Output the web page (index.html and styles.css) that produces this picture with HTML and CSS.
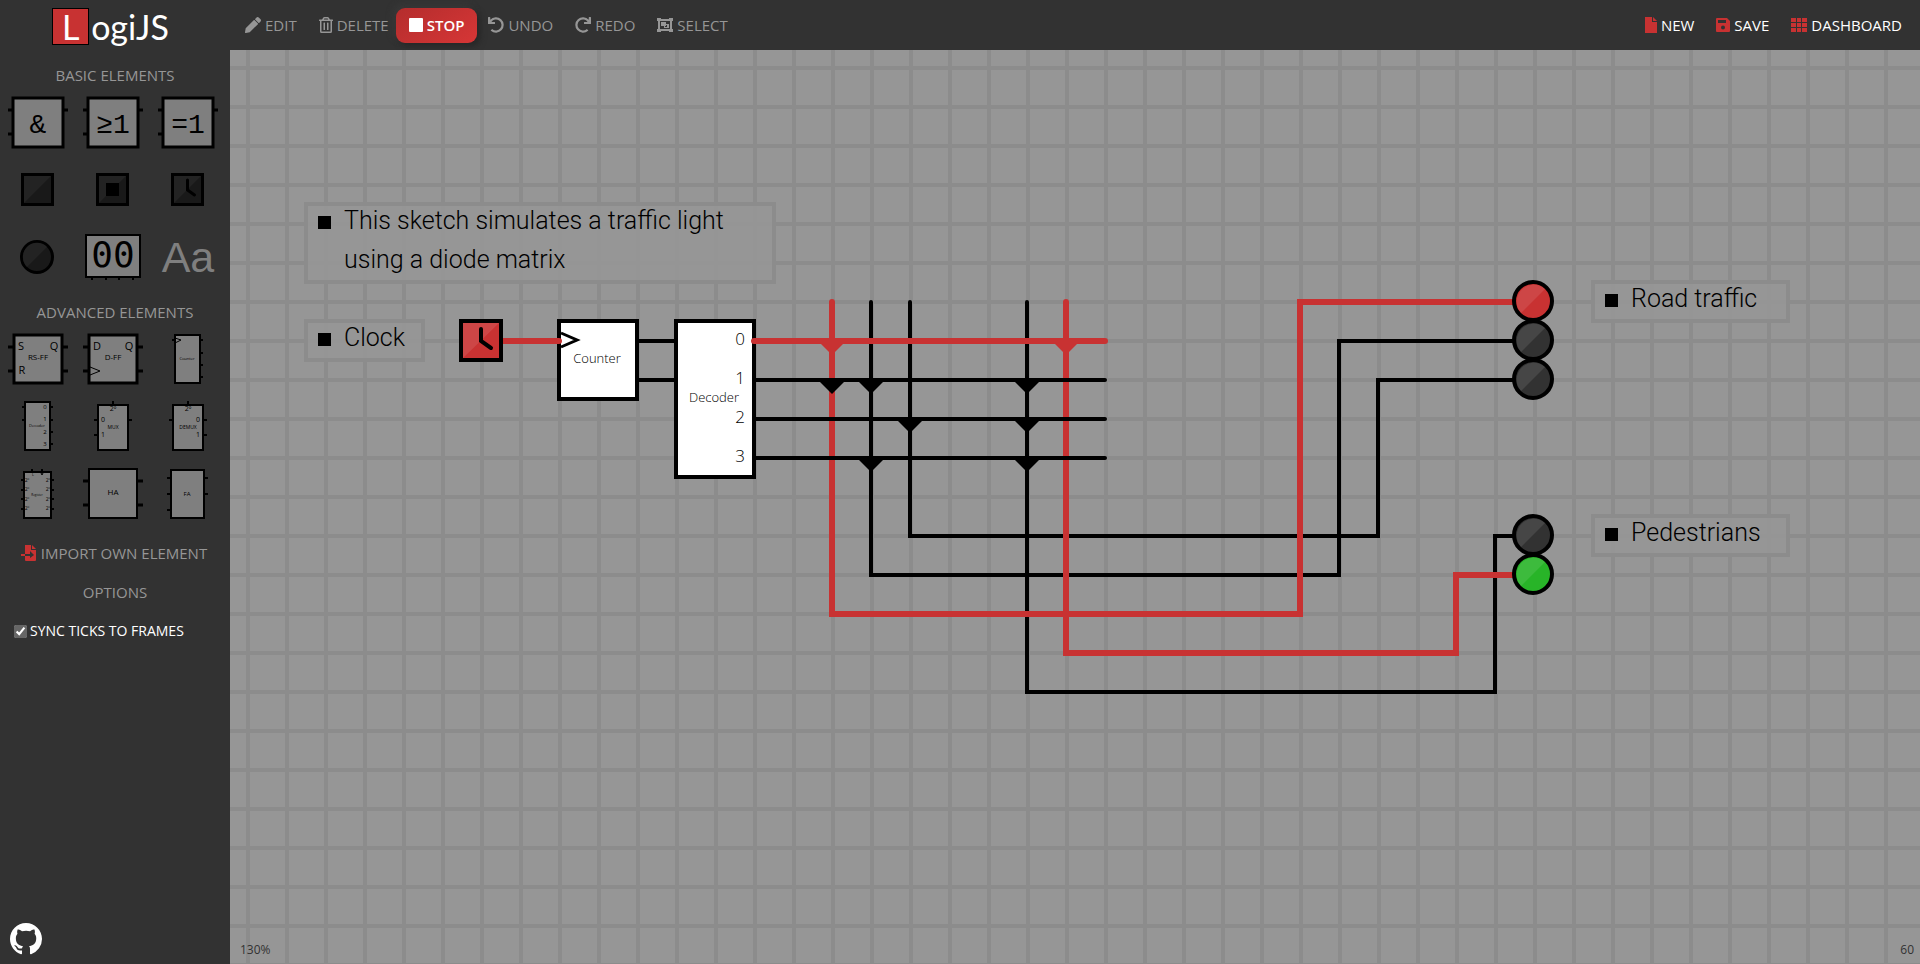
FILE: index.html
```html
<!DOCTYPE html>
<html lang="en">
<head>
<meta charset="utf-8">
<title>LogiJS</title>
<link rel="stylesheet" href="styles.css">
</head>
<body>
<div class="app">
  <aside class="sidebar">
    <a class="logo" href="#" aria-label="LogiJS"><span class="logo-mark">L</span><span class="logo-rest">ogiJS</span></a>

    <h2 class="heading">BASIC ELEMENTS</h2>
    <div class="palette">
      <button class="element" aria-label="AND gate"><svg viewBox="0 0 75 67"><path class="pin" d="M8 21h5M8 45h5M63 21h5"/><rect class="body thick" x="13" y="9" width="50" height="49"/><text class="mono" x="38" y="44">&amp;</text></svg></button>
      <button class="element" aria-label="OR gate"><svg viewBox="0 0 75 67"><path class="pin" d="M8 21h5M8 45h5M63 21h5"/><rect class="body thick" x="13" y="9" width="50" height="49"/><text class="mono" x="38" y="44">≥1</text></svg></button>
      <button class="element" aria-label="XOR gate"><svg viewBox="0 0 75 67"><path class="pin" d="M8 21h5M8 45h5M63 21h5"/><rect class="body thick" x="13" y="9" width="50" height="49"/><text class="mono" x="38" y="44">=1</text></svg></button>
      <button class="element" aria-label="Switch"><svg viewBox="0 0 75 67"><rect class="dark" x="22.500" y="18.500" width="30" height="30"/><path class="gloss" d="M24 20h27L24 47z"/></svg></button>
      <button class="element" aria-label="Button"><svg viewBox="0 0 75 67"><rect class="dark" x="22.500" y="18.500" width="30" height="30"/><path class="gloss" d="M24 20h27L24 47z"/><path d="M31 27h13v13H31z"/></svg></button>
      <button class="element" aria-label="Clock"><svg viewBox="0 0 75 67"><rect class="dark" x="22.500" y="18.500" width="30" height="30"/><path class="gloss" d="M24 20h27L24 47z"/><path class="hands" d="M37.500 24v10l7 5"/></svg></button>
      <button class="element" aria-label="Lamp"><svg viewBox="0 0 75 67"><circle class="dark" cx="37" cy="34" r="15.500"/><path class="gloss" d="M47 24A14 14 0 0 0 27 44z"/></svg></button>
      <button class="element" aria-label="Segment display"><svg viewBox="0 0 75 67"><path class="pin slim" d="M17 54v3M31 54v3M44 54v3M58 54v3"/><rect class="body medium" x="11" y="12" width="54" height="42"/><text class="digits" x="38" y="44">00</text></svg></button>
      <button class="element" aria-label="Label"><svg viewBox="0 0 75 67"><text class="letters" x="38" y="49">Aa</text></svg></button>
    </div>

    <h2 class="heading">ADVANCED ELEMENTS</h2>
    <div class="palette">
      <button class="element" aria-label="RS flip-flop"><svg viewBox="0 0 75 67"><path class="pin" d="M8 21h5M8 45h5M63 21h5M63 45h5"/><rect class="body" x="14" y="9" width="48" height="48"/><text class="t11" x="21" y="24">S</text><text class="t11" x="22" y="48">R</text><text class="t11" x="54" y="24">Q</text><text class="t8" x="38" y="34">RS-FF</text></svg></button>
      <button class="element" aria-label="D flip-flop"><svg viewBox="0 0 75 67"><path class="pin" d="M8 21h5M8 45h5M63 21h5M63 45h5"/><rect class="body" x="14" y="9" width="48" height="48"/><path class="line" d="M15 41l10 4-10 4"/><text class="t11" x="22" y="24">D</text><text class="t11" x="54" y="24">Q</text><text class="t8" x="38" y="34">D-FF</text></svg></button>
      <button class="element" aria-label="Counter"><svg viewBox="0 0 75 67"><path class="pin slim" d="M22 14h3M50 14h3M50 27h3M50 39h3M50 51h3"/><rect class="body thin" x="25" y="9" width="25" height="48"/><path class="line" d="M25 12l6 2-6 3"/><text class="t4" x="37" y="34">Counter</text></svg></button>
      <button class="element" aria-label="Decoder"><svg viewBox="0 0 75 67"><path class="pin slim" d="M22 14h3M22 27h3M50 14h3M50 27h3M50 39h3M50 51h3"/><rect class="body thin" x="25" y="9" width="25" height="48"/><text class="t6" x="45" y="16">0</text><text class="t6" x="45" y="28">1</text><text class="t6" x="45" y="41">2</text><text class="t6" x="45" y="53">3</text><text class="t4" x="37" y="34">Decoder</text></svg></button>
      <button class="element" aria-label="Multiplexer"><svg viewBox="0 0 75 67"><path class="pin slim" d="M38 8v3M19 27h3M19 42h3M53 27h4"/><rect class="body thin" x="23" y="12" width="30" height="45"/><text class="t7" x="38" y="18">2º</text><text class="t7" x="28" y="29">0</text><text class="t7" x="28" y="44">1</text><text class="t5" x="38" y="36">MUX</text></svg></button>
      <button class="element" aria-label="Demultiplexer"><svg viewBox="0 0 75 67"><path class="pin slim" d="M38 8v3M19 27h3M53 42h4M53 27h4"/><rect class="body thin" x="23" y="12" width="30" height="45"/><text class="t7" x="38" y="18">2º</text><text class="t7" x="48" y="29">0</text><text class="t7" x="48" y="44">1</text><text class="t5" x="38" y="36">DEMUX</text></svg></button>
      <button class="element" aria-label="Register"><svg viewBox="0 0 75 67"><path class="pin slim" d="M32 9v3M42 9v3M21 20h3M21 30h3M21 39h3M21 49h3M51 20h3M51 30h3M51 39h3M51 49h3"/><rect class="body thin" x="24" y="12" width="27" height="46"/><path class="line" d="M40 11l2 4 2-4"/><text class="t4" x="33" y="16">L</text><text class="t5" x="27" y="22">2º</text><text class="t5" x="27" y="31">2º</text><text class="t5" x="27" y="41">2º</text><text class="t5" x="27" y="50">2º</text><text class="t5" x="48" y="22">2º</text><text class="t5" x="48" y="31">2º</text><text class="t5" x="48" y="41">2º</text><text class="t5" x="48" y="50">2º</text><text class="t3" x="37" y="36">Register</text></svg></button>
      <button class="element" aria-label="Half adder"><svg viewBox="0 0 75 67"><path class="pin" d="M8 21h5M8 45h5M63 21h5M63 45h5"/><rect class="body medium" x="14" y="9" width="48" height="49"/><text class="t8" x="38" y="35">HA</text></svg></button>
      <button class="element" aria-label="Full adder"><svg viewBox="0 0 75 67"><path class="pin slim" d="M17 18h4M17 34h4M17 50h4M54 18h4M54 34h4"/><rect class="body thin" x="21" y="10" width="33" height="48"/><text class="t6" x="37" y="36">FA</text></svg></button>
    </div>

    <button class="import"><svg class="icon" viewBox="0 0 16 16"><path fill="#c83232" d="M4 0h6v5h5v10a1 1 0 0 1-1 1H5a1 1 0 0 1-1-1v-4h5v2l4-3-4-4v3H4zM11 0l4 4h-4z"/><path fill="#c83232" d="M0 9h4v2H0z"/></svg>IMPORT OWN ELEMENT</button>
    <h2 class="heading">OPTIONS</h2>
    <label class="option"><input type="checkbox" checked>SYNC TICKS TO FRAMES</label>

    <a class="github" href="#" aria-label="GitHub"><svg viewBox="0 0 16 16"><path fill="#fff" d="M8 0C3.580 0 0 3.580 0 8c0 3.540 2.290 6.530 5.470 7.590.4.070.55-.17.55-.38 0-.19-.01-.82-.01-1.490-2.010.37-2.530-.49-2.690-.94-.09-.23-.48-.94-.82-1.130-.28-.15-.68-.52-.01-.53.63-.01 1.080.58 1.230.82.72 1.210 1.870.87 2.330.66.07-.52.28-.87.51-1.070-1.780-.2-3.640-.89-3.640-3.950 0-.87.31-1.590.82-2.150-.08-.2-.36-1.020.08-2.120 0 0 .67-.21 2.200.82.64-.18 1.320-.27 2-.27s1.360.09 2 .27c1.530-1.040 2.200-.82 2.200-.82.44 1.100.16 1.920.08 2.120.51.56.82 1.270.82 2.150 0 3.070-1.870 3.750-3.650 3.950.29.25.54.73.54 1.480 0 1.070-.01 1.930-.01 2.200 0 .21.15.46.55.38A8.010 8.010 0 0 0 16 8c0-4.420-3.580-8-8-8z"/></svg></a>
  </aside>

  <main class="main">
    <nav class="toolbar">
      <button class="tool"><svg class="icon" viewBox="0 0 512 512"><path d="M498 142l-46 46c-5 5-12 5-17 0L324 77c-5-5-5-12 0-17l46-46c19-19 49-19 68 0l60 60c19 19 19 49 0 68zM285 98L22 361 0 484c-3 16 12 31 28 28l123-22 263-262c5-5 5-12 0-17L302 98c-5-5-12-5-17 0z"/></svg>EDIT</button>
      <button class="tool"><svg class="icon narrow" viewBox="0 0 448 512"><path d="M268 416h24a12 12 0 0 0 12-12V188a12 12 0 0 0-12-12h-24a12 12 0 0 0-12 12v216a12 12 0 0 0 12 12zM432 80h-82l-34-57A48 48 0 0 0 275 0H173a48 48 0 0 0-41 23L98 80H16A16 16 0 0 0 0 96v16a16 16 0 0 0 16 16h16v336a48 48 0 0 0 48 48h288a48 48 0 0 0 48-48V128h16a16 16 0 0 0 16-16V96a16 16 0 0 0-16-16zM172 51a6 6 0 0 1 5-3h94a6 6 0 0 1 5 3l18 29H154zM368 464H80V128h288zM156 416h24a12 12 0 0 0 12-12V188a12 12 0 0 0-12-12h-24a12 12 0 0 0-12 12v216a12 12 0 0 0 12 12z"/></svg>DELETE</button>
      <button class="tool stop"><svg class="icon narrow" viewBox="0 0 14 14"><rect width="14" height="14" rx="1"/></svg>STOP</button>
      <button class="tool"><svg class="icon" viewBox="0 0 512 512"><path d="M212 224H12a12 12 0 0 1-12-12V12A12 12 0 0 1 12 0h48a12 12 0 0 1 12 12v78A247 247 0 1 1 92 441a12 12 0 0 1 0-17l34-34a12 12 0 0 1 16 0A176 176 0 1 0 108 156h104a12 12 0 0 1 12 12v44a12 12 0 0 1-12 12z"/></svg>UNDO</button>
      <button class="tool"><svg class="icon" viewBox="0 0 512 512"><path transform="matrix(-1 0 0 1 512 0)" d="M212 224H12a12 12 0 0 1-12-12V12A12 12 0 0 1 12 0h48a12 12 0 0 1 12 12v78A247 247 0 1 1 92 441a12 12 0 0 1 0-17l34-34a12 12 0 0 1 16 0A176 176 0 1 0 108 156h104a12 12 0 0 1 12 12v44a12 12 0 0 1-12 12z"/></svg>REDO</button>
      <button class="tool"><svg class="icon" viewBox="0 0 16 16"><path fill-rule="evenodd" d="M0 1h4v1h8V1h4v3h-1v8h1v3h-4v-1H4v1H0v-3h1V4H0zM3 4v8h10V4zM4 5h5v2h3v4H7V9H4zm6 3v2h-2V9H9V8z"/></svg>SELECT</button>
      <div class="spacer"></div>
      <button class="tool file"><svg class="icon page" viewBox="0 0 12 16"><path d="M0 0h7v5h5v11H0zM8 0l4 4H8z"/></svg>NEW</button>
      <button class="tool file"><svg class="icon narrow" viewBox="0 0 14 14"><path fill-rule="evenodd" d="M1 0h10l3 3v10a1 1 0 0 1-1 1H1a1 1 0 0 1-1-1V1a1 1 0 0 1 1-1zM2 2v3h8V2zM7 7.500a2 2 0 1 0 0 4 2 2 0 0 0 0-4z"/></svg>SAVE</button>
      <a class="tool file" href="#"><svg class="icon" viewBox="0 0 16 14"><path d="M0 0h5v4H0zM6 0h4v4H6zM11 0h5v4h-5zM0 5h5v4H0zM6 5h4v4H6zM11 5h5v4h-5zM0 10h5v4H0zM6 10h4v4H6zM11 10h5v4h-5z"/></svg>DASHBOARD</a>
    </nav>

    <div class="workspace">
      <svg class="sketch" role="img" aria-label="Traffic light circuit">
        <defs>
          <pattern id="grid" x="16" y="16" width="39" height="39" patternUnits="userSpaceOnUse"><path class="grid-line" d="M0 0h39v4H4v35H0z"/></pattern>
          <g id="gloss"><path class="shine" d="M12-12A17 17 0 0 0-12 12z"/></g>
          <path id="diode" d="M-12 2h24L0 14z"/>
        </defs>
        <rect width="100%" height="100%" fill="url(#grid)"/>
        <g transform="translate(-230 -50)">
          <g class="wire">
            <path d="M871 302V575H1339V341H1520"/>
            <path d="M910 302V536H1378V380H1520"/>
            <path d="M1027 302V692H1495V536H1520"/>
          </g>
          <g class="wire on">
            <path d="M832 302V614H1300V302H1520"/>
            <path d="M1066 302V653H1456V575H1520"/>
          </g>
          <path class="wire" d="M637 341H676M637 380H676M754 380H1105M754 419H1105M754 458H1105"/>
          <g>
            <use href="#diode" x="832" y="380"/><use href="#diode" x="871" y="380"/><use href="#diode" x="1027" y="380"/>
            <use href="#diode" x="910" y="419"/><use href="#diode" x="1027" y="419"/>
            <use href="#diode" x="871" y="458"/><use href="#diode" x="1027" y="458"/>
          </g>
          <g class="diode-on"><use href="#diode" x="832" y="341"/><use href="#diode" x="1066" y="341"/></g>

          <rect class="chip" x="559" y="321" width="78" height="78"/>
          <path class="edge" d="M561 333l16 7-16 7"/>
          <text class="name" x="597" y="363">Counter</text>
          <rect class="chip" x="676" y="321" width="78" height="156"/>
          <text class="port" x="740" y="345">0</text>
          <text class="port" x="740" y="384">1</text>
          <text class="port" x="740" y="423">2</text>
          <text class="port" x="740" y="462">3</text>
          <text class="name" x="714" y="402">Decoder</text>
          <path class="wire on" d="M500 341H559M754 341H1105"/>

          <rect class="clock" x="461" y="321" width="40" height="39"/>
          <path class="shine" d="M463 323h36l-36 35z"/>
          <path class="clock-hands" d="M481 329v12l10 7"/>

          <g class="lamp lit-red" transform="translate(1533 301)"><circle r="19"/><use href="#gloss"/></g>
          <g class="lamp" transform="translate(1533 340)"><circle r="19"/><use href="#gloss"/></g>
          <g class="lamp" transform="translate(1533 379)"><circle r="19"/><use href="#gloss"/></g>
          <g class="lamp" transform="translate(1533 535)"><circle r="19"/><use href="#gloss"/></g>
          <g class="lamp lit-green" transform="translate(1533 574)"><circle r="19"/><use href="#gloss"/></g>

          <g class="note"><rect x="306" y="204" width="468" height="78"/><path d="M318 216h13v13h-13z"/><text x="344" y="229">This sketch simulates a traffic light</text><text x="344" y="268">using a diode matrix</text></g>
          <g class="note"><rect x="306" y="321" width="117" height="39"/><path d="M318 333h13v13h-13z"/><text x="344" y="346">Clock</text></g>
          <g class="note"><rect x="1593" y="282" width="195" height="39"/><path d="M1605 294h13v13h-13z"/><text x="1631" y="307">Road traffic</text></g>
          <g class="note"><rect x="1593" y="516" width="195" height="39"/><path d="M1605 528h13v13h-13z"/><text x="1631" y="541">Pedestrians</text></g>
        </g>
      </svg>
      <span class="status zoom-level">130%</span>
      <span class="status frame-rate">60</span>
    </div>
  </main>
</div>
</body>
</html>
```
FILE: styles.css
```css
* { box-sizing: border-box; }
body {
  margin: 0;
  font-family: "Open Sans", "Noto Sans", sans-serif;
  font-size: 15px;
  color: #969696;
  background: #323232;
}
button { font: inherit; color: inherit; background: none; border: 0; padding: 0; cursor: pointer; }
a { color: inherit; text-decoration: none; }
svg { display: block; }

.app { display: flex; min-height: 100vh; }

/* Sidebar */
.sidebar {
  flex: 0 0 230px;
  display: flex;
  flex-direction: column;
  align-items: stretch;
  background: #323232;
}
.logo {
  display: flex;
  justify-content: center;
  gap: 2px;
  margin: 8px 9px 15px 0;
  height: 38px;
  font-family: Lato, sans-serif;
  font-size: 34px;
  line-height: 38px;
  color: #fff;
}
.logo-mark {
  width: 37px;
  height: 37px;
  line-height: 36px;
  text-align: center;
  background: #c83232;
  border: 1px solid #000;
}
.heading {
  margin: 0;
  font-size: 15px;
  font-weight: 400;
  line-height: 28px;
  text-align: center;
}
.palette {
  display: grid;
  grid-template-columns: repeat(3, 75px);
  grid-auto-rows: 67px;
  margin-bottom: 8px;
}
.element svg { width: 75px; height: 67px; }
.pin { stroke: #000; stroke-width: 3; }
.pin.slim { stroke-width: 2; }
.body { fill: #7f7f7f; stroke: #000; stroke-width: 3; }
.body.thin { stroke-width: 2; }
.body.medium { stroke-width: 2; }
.dark { fill: #191919; stroke: #000; stroke-width: 3; }
.gloss { fill: #232323; }
.hands { fill: none; stroke: #000; stroke-width: 3; stroke-linecap: round; }
.line { fill: none; stroke: #000; stroke-width: 1; }
.element text { text-anchor: middle; fill: #000; }
.element .mono { font-family: "Liberation Mono", monospace; font-size: 28px; }
.element .digits { font-family: "DejaVu Sans Mono", monospace; font-size: 36px; }
.element .letters { font-family: "Liberation Sans", Arial, sans-serif; font-size: 43px; fill: #7f7f7f; }
.t11 { font-size: 11px; }
.t8 { font-size: 8px; }
.t7 { font-size: 7px; }
.t6 { font-size: 6px; }
.t5 { font-size: 5px; }
.t4 { font-size: 4px; }
.t3 { font-size: 3px; }

.import {
  display: flex;
  justify-content: center;
  align-items: center;
  gap: 4px;
  height: 36px;
  margin: 0 2px 7px 0;
}
.option {
  display: flex;
  align-items: center;
  gap: 3px;
  margin: 15px 0 0 14px;
  font-size: 14px;
  line-height: 20px;
  color: #fff;
}
.option input { width: 13px; height: 13px; margin: 0; accent-color: #666; }
.github { margin: auto 0 9px 10px; width: 32px; }

/* Toolbar */
.main { flex: 1; display: flex; flex-direction: column; min-width: 0; }
.toolbar {
  display: flex;
  align-items: center;
  height: 50px;
  padding: 0 7px 0 4px;
  background: #323232;
}
.tool {
  display: flex;
  align-items: center;
  gap: 4px;
  height: 35px;
  padding: 0 11px;
}
.icon { width: 16px; height: 16px; fill: currentColor; }
.icon.narrow { width: 14px; }
.icon.page { width: 12px; }
.stop {
  margin-left: -4px;
  padding: 0 13px;
  color: #fff;
  font-weight: 600;
  border-radius: 9px;
  background: linear-gradient(145deg, #b42d2d, #d63636);
  box-shadow: 3px 3px 6px #262626, -3px -3px 6px #3a3a3a;
}
.file { color: #fff; }
.file .icon { fill: #c83232; }
.spacer { flex: 1; }

/* Sketch canvas */
.workspace { position: relative; flex: 1; background: #969696; display: flex; overflow: hidden; }
.sketch { flex: 1; width: 100%; }
.grid-line { fill: #8c8c8c; }
.wire { fill: none; stroke: #000; stroke-width: 4; stroke-linecap: round; }
.wire.on { stroke: #c83232; stroke-width: 6; }
.diode-on { fill: #c83232; }
.chip { fill: #fff; stroke: #000; stroke-width: 4; }
.edge { fill: none; stroke: #000; stroke-width: 3; }
.sketch text { fill: #000; }
.sketch .name { font-size: 13px; font-weight: 300; text-anchor: middle; }
.sketch .port { font-size: 17px; font-weight: 300; text-anchor: middle; }
.clock { fill: #c83232; stroke: #000; stroke-width: 4; }
.clock-hands { fill: none; stroke: #000; stroke-width: 4; stroke-linecap: round; }
.shine { fill: #fff; fill-opacity: 0.1; }
.lamp circle { fill: #323232; stroke: #000; stroke-width: 4; }
.lamp.lit-red circle { fill: #c83232; }
.lamp.lit-green circle { fill: #28b428; }
.lit-green .shine { fill-opacity: 0.18; }
.note rect { fill: #969696; fill-opacity: 0.9; stroke: #8c8c8c; stroke-width: 4; }
.note text { font-family: Roboto, "Open Sans", sans-serif; font-size: 25px; font-weight: 300; }

.status { position: absolute; bottom: 6px; font-size: 12px; line-height: 16px; color: #323232; }
.zoom-level { left: 10px; }
.frame-rate { right: 6px; }
```
